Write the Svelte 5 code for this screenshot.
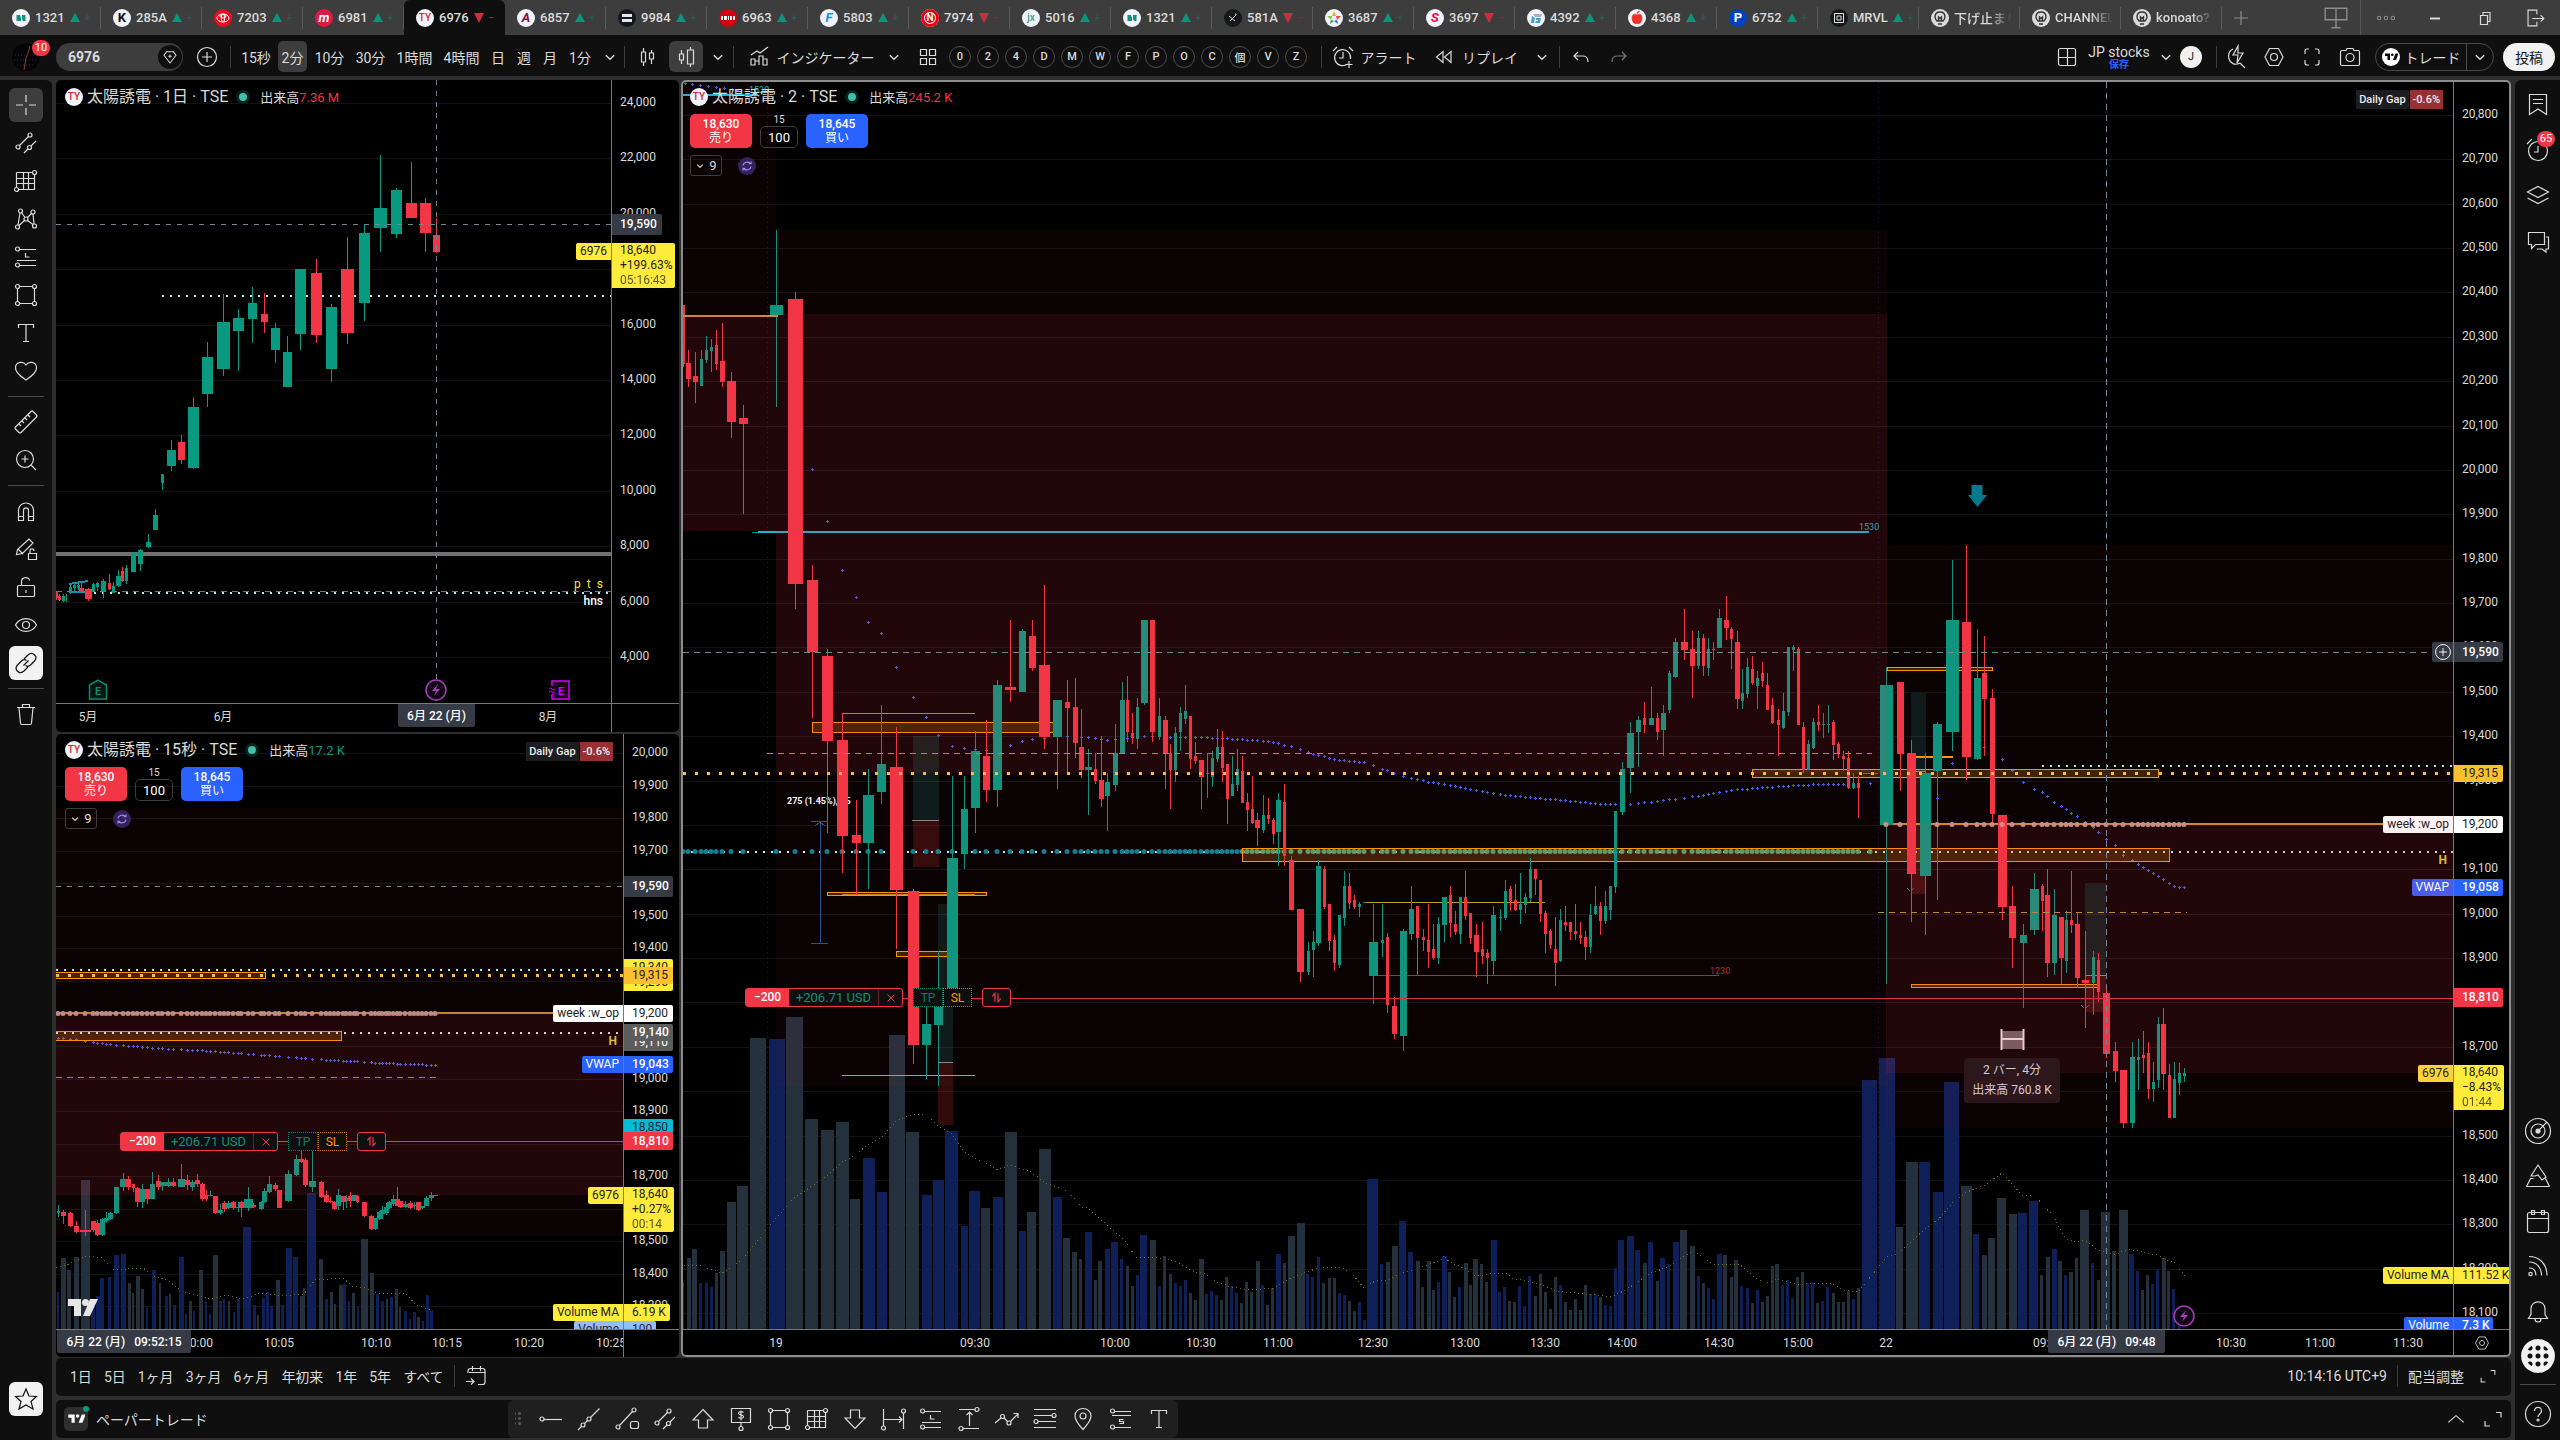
<script>
    const tabs = [
        { name: '1321', logo: 'bars', bg: '#f0f3fa', fg: '#12917c', dir: 'up' },
        { name: '285A', mark: 'K', bg: '#f0f3fa', fg: '#111', dir: 'up' },
        { name: '7203', logo: 'rings', bg: '#eb0a1e', fg: '#fff', dir: 'up' },
        { name: '6981', mark: 'm', slant: true, bg: '#e21a43', fg: '#fff', dir: 'up' },
        { name: '6976', mark: 'TY', bg: '#f0f3fa', fg: '#d8222f', dir: 'down', active: true },
        { name: '6857', mark: 'A', slant: true, bg: '#f0f3fa', fg: '#8a1046', dir: 'up' },
        { name: '9984', logo: 'equal', bg: '#131722', fg: '#e6e6e6', dir: 'up' },
        { name: '6963', logo: 'band', bg: '#d7000f', fg: '#fff', dir: 'up' },
        { name: '5803', mark: 'F', slant: true, bg: '#f0f3fa', fg: '#1492e6', dir: 'up' },
        { name: '7974', mark: 'N', ring: true, bg: '#e60012', fg: '#fff', dir: 'down' },
        { name: '5016', mark: 'jx', bg: '#f0f3fa', fg: '#3a9b86', dir: 'up' },
        { name: '1321', logo: 'bars', bg: '#f0f3fa', fg: '#12917c', dir: 'up' },
        { name: '581A', logo: 'spark', bg: '#16181d', fg: '#ddd', dir: 'down' },
        { name: '3687', logo: 'star', bg: '#f0f3fa', fg: '#2962ff', dir: 'up' },
        { name: '3697', mark: 'S', slant: true, bg: '#f0f3fa', fg: '#e0113c', dir: 'down' },
        { name: '4392', logo: 'fold', bg: '#f0f3fa', fg: '#4b9fd0', dir: 'up' },
        { name: '4368', logo: 'apple', bg: '#f0f3fa', fg: '#ee3124', dir: 'up' },
        { name: '6752', mark: 'P', bg: '#0041c0', fg: '#fff', dir: 'up' },
        { name: 'MRVL', logo: 'chip', bg: '#16181d', fg: '#e6e6e6', dir: 'up' },
        { name: '下げ止まり', logo: 'face', bg: '#dbdbdb', fg: '#333' },
        { name: 'CHANNEL', logo: 'face', bg: '#dbdbdb', fg: '#333' },
        { name: 'konoato?', logo: 'face', bg: '#dbdbdb', fg: '#333' }
    ];

    const logos = {
        bars: '<path d="M4.500 6h3.500l1 3v3H4.500zM10 6h3.500v6H11l-1-2z" fill="currentColor"/>',
        rings: '<g fill="none" stroke="currentColor"><ellipse cx="9" cy="9" rx="6" ry="4"/><ellipse cx="9" cy="7" rx="3" ry="2"/><ellipse cx="9" cy="9" rx="1.6" ry="4"/></g>',
        equal: '<path d="M4 5h10v3H4zM4 10h10v3H4z" fill="currentColor"/>',
        band: '<path d="M2 7h2v4H2zM5 7h3v4H5zM9 7h1v4H9zM11 7h2v4h-2zM14 7h2v4h-2z" fill="currentColor"/>',
        spark: '<path d="M5 7l6 5M6 12l6-6M11 5h1v1" fill="none" stroke="currentColor"/>',
        star: '<path d="M9 2l2 5H7z" fill="#f5a623"/><path d="M16 7l-4 4-1-4z" fill="#e8483f"/><path d="M13 15l-4-3 3-1z" fill="#2962ff"/><path d="M5 15l1-4 3 1z" fill="#1aa260"/><path d="M2 7l5 0-1 4z" fill="#8bc34a"/>',
        fold: '<path d="M6 5h9l-1 3H8z" fill="#a7b4be"/><path d="M5 7l3 2-1 5H4zM9 9h5l-1 5H8l1-2h2v-1H9z" fill="currentColor"/>',
        apple: '<path d="M9 6c3-2 5 0 5 3s-2 6-4 6l-1-1-1 1c-2 0-4-3-4-6s2-5 5-3zM9 5c0-2 1-3 3-3" fill="currentColor" stroke="currentColor" stroke-width=".6"/>',
        chip: '<path d="M4.500 4.500h9v9h-9zM7 7h4v4H7z" fill="none" stroke="currentColor"/>',
        face: '<path d="M9 3c3 0 5 2 5 5 0 2-1 3-2 4H6c-1-1-2-2-2-4 0-3 2-5 5-5zM7.500 12V8L9 9.500 10.500 8v4M7 15h4" fill="none" stroke="currentColor" stroke-width="1.400"/>'
    };

    const icons = {
        plusCircle: '<circle cx="14" cy="14" r="9.500"/><path d="M14 9v10M9 14h10"/>',
        gem: '<path d="M10 8h8l3 4-7 9-7-9zM14 11v4M12 13h4"/>',
        chevron: '<path d="M9.500 12l4.500 4.500 4.500-4.500" stroke-width="1.500"/>',
        chevronBold: '<path d="M6 10l8 8 8-8" stroke-width="3"/>',
        chevronUp: '<path d="M5 18l9-8 9 8"/>',
        candles: '<path d="M10.500 5v4M10.500 19v4M8.500 9h4v10h-4zM18.500 7v3M18.500 16v5M16.500 10h4v6h-4z"/>',
        hollow: '<path d="M9.500 7v4M9.500 17v4M7.500 11h4v6h-4zM18.500 4v3M18.500 21v3M15.500 7h6v14h-6z"/>',
        indicators: '<path d="M6 22v-6h4v6zM10 22v-4h4v4M14 22v-9h4v9M18 22v-6h4v6zM6 12l6-4 3 2 8-6"/>',
        grid4: '<path d="M6.500 6.500h6v6h-6zM15.500 6.500h6v6h-6zM6.500 15.500h6v6h-6zM15.500 15.500h6v6h-6z"/>',
        alarm: '<path d="M18.500 21a8 8 0 1 1 3-5"/><path d="M14 9v6h-4M4 8l4-4M20 4l4 4M20 18v7M16.500 21.500h7"/>',
        replay: '<path d="M13 8.500v11L6.500 14zM21 8.500v11L14.500 14z"/>',
        undo: '<path d="M11 9l-4 4 4 4M7 13h9c3 0 5 2 5 6"/>',
        redo: '<path d="M17 9l4 4-4 4M21 13h-9c-3 0-5 2-5 6"/>',
        layout: '<rect x="5.500" y="5.500" width="17" height="17" rx="2"/><path d="M14.500 5v17M6 14.500h16"/>',
        flash: '<path d="M11 6c-4 2-5 6-4 10s6 7 11 4M18 20l5 5M16 3l-5 9h5l-1 8 6-10h-5z"/>',
        hex: '<path d="M9.500 5.500h9l4.500 8.500-4.500 8.500h-9L5 14z"/><circle cx="14" cy="14" r="3.500"/>',
        full: '<path d="M7 11V8q0-2 2-2h2M17 6h2q2 0 2 2v3M21 17v3q0 2-2 2h-2M11 22H9q-2 0-2-2v-3"/>',
        camera: '<path d="M4.500 9q0-1.500 1.500-1.500h4l1-2h6l1 2h4q1.500 0 1.500 1.500v12q0 1.500-1.500 1.500H6q-1.500 0-1.500-1.500z"/><circle cx="14" cy="14.500" r="4"/>',
        cross: '<path d="M14 4v7M14 17v7M4 14h7M17 14h7"/>',
        trend: '<circle cx="6" cy="18" r="2"/><circle cx="18" cy="6" r="2"/><path d="M7.500 16.500l9-9M12 24l4-4M19 17l5-5"/><circle cx="17.500" cy="18.500" r="2"/>',
        gann: '<path d="M4.500 5.500h16M4.500 5.500v15M6 22.500h16.500V7M5 11.500h18M5 16.500h18M11.500 5v18M16.500 5v18"/><circle cx="22.500" cy="5.500" r="2"/><circle cx="4.500" cy="22.500" r="2"/>',
        pattern: '<path d="M6 20l2-12M9.500 7.500l3.500 5M15.500 12.500l4-4M21 9l1 10M7 20.500l5.500-5M15.500 15.500l5.500 4"/><circle cx="5.500" cy="22" r="2"/><circle cx="8.500" cy="6" r="2"/><circle cx="14" cy="14" r="2"/><circle cx="21" cy="7" r="2"/><circle cx="22.500" cy="21" r="2"/>',
        position: '<circle cx="5.500" cy="6" r="2"/><circle cx="5.500" cy="22" r="2"/><path d="M8 6.500h16M5 17.500h19M8 22.500h16M13.500 10v4h4"/>',
        shortPosition: '<circle cx="5.500" cy="6" r="2"/><circle cx="5.500" cy="22" r="2"/><path d="M8 6.500h16M5 10.500h19M8 22.500h16M16.500 14.500h-4v2h4v2h-4"/>',
        rect: '<path d="M7 5.500h14M7 22.500h14M5.500 7v14M22.500 7v14"/><circle cx="5.500" cy="5.500" r="2"/><circle cx="22.500" cy="5.500" r="2"/><circle cx="5.500" cy="22.500" r="2"/><circle cx="22.500" cy="22.500" r="2"/>',
        text: '<path d="M6.500 9V5.500h15V9M14 5.500v17M11 22.500h6"/>',
        heart: '<path d="M14 23C5 17 3 13 3.500 10c.800-5 7.500-6.500 10.500-2 3-4.500 9.700-3 10.500 2 .500 3-1.500 7-10.500 13z"/>',
        ruler: '<path d="M3.500 19L19 3.500q1-1 2 0L24.500 7q1 1 0 2L9 24.500q-1 1-2 0L3.500 21q-1-1 0-2zM7 16l2 2M10 13l2 2M13 10l2 2M16 7l2 2"/>',
        zoom: '<circle cx="13" cy="13" r="8.500"/><path d="M13 9.500v7M9.500 13h7M19 19l5 5"/>',
        magnet: '<path d="M6.500 23.500v-10c0-10 15-10 15 0v10h-5v-10c0-3.500-5-3.500-5 0v10zM6.500 19.500h5M16.500 19.500h5"/>',
        pencilLock: '<path d="M4.500 19.500l1-5L17 4l4 4-10.500 10.500zM6 14l5 5M16.500 18.500h8v6h-8zM18 18v-2c0-3 4-3 4 0"/>',
        lock: '<rect x="5.500" y="12.500" width="17" height="11" rx="1"/><path d="M9.500 12V8.500c0-5 8-5 8-1M14 17v3"/>',
        eye: '<path d="M3.500 14C8 5.500 20 5.500 24.500 14 20 22.500 8 22.500 3.500 14z"/><circle cx="14" cy="14" r="3.500"/>',
        link: '<path d="M12 10l4-4c4.500-4 10.500 1.500 6.500 6l-4 4c-1.500 1.500-3.500 1.500-5 .500M16 18l-4 4c-4.500 4-10.500-1.500-6.500-6l4-4c1.500-1.500 3.500-1.500 5-.500M11.500 16.500l5-5"/>',
        trash: '<path d="M5 7.500h18M10.500 7V4.500h7V7M7 8l1.500 15q0 1.500 1.500 1.500h8q1.500 0 1.500-1.500L21 8"/>',
        star: '<path d="M14 4l3 7 7.500.500-5.500 5 2 7.500-7-4-7 4 2-7.500-5.500-5L11 11z"/>',
        list: '<path d="M5.500 4.500h17v20L14 19l-8.500 5.500zM9 9.500h10M9 13.500h10"/>',
        clock: '<circle cx="14" cy="15" r="9.500"/><path d="M14 10v6h-4M3 8l5-5M20 3l5 5"/>',
        layers: '<path d="M14 4.500l10.500 5.500L14 15.500 3.500 10zM3.500 16L14 21.500 24.500 16"/>',
        chat: '<path d="M4.500 4.500h16v12h-9l-4 4v-4h-3zM22 9h2.500v12H22v3l-4-3h-5"/>',
        radar: '<circle cx="14" cy="14" r="12.500"/><circle cx="14" cy="14" r="7"/><circle cx="14" cy="14" r="2" fill="currentColor"/><path d="M15 13l8-8"/>',
        pine: '<path d="M2.500 24.500h23M2.500 24.500l4-8h3M25.500 24.500l-4-8M7 14l7-11 8 12-4 3-4-5-3 1z"/>',
        calendar: '<rect x="3.500" y="5.500" width="21" height="20" rx="2"/><path d="M4 11.500h20M7.500 3.500h3v4h-3zM17.500 3.500h3v4h-3z"/>',
        feed: '<circle cx="6.500" cy="22" r="1.700"/><path d="M5 4.500c11 0 18 8 18 19M5 10c8 0 12.500 6 12.500 13.500M5 16c5 0 7 3.500 7 7.500"/>',
        bell: '<path d="M4.500 21.500h19l-2.500-4V12C21 2.500 7 2.500 7 12v5.500zM11 22c0 4 6 4 6 0"/>',
        help: '<circle cx="14" cy="14" r="12.500"/><path d="M10.500 11c0-5 7-4.500 7 0 0 3-3.500 3-3.500 6"/><circle cx="14" cy="20" r="1"/>',
        goto: '<path d="M6 11V9q0-2.500 2.500-2.500h12Q23 6.500 23 9v11q0 2.500-2.500 2.500H16M7 10.500h16M10.500 4v5M18.500 4v5M4 19.500h8M9 16.500l3 3-3 3"/>',
        expand: '<path d="M17 7.500h5v5M6 16v5h5"/>',
        hline: '<circle cx="5" cy="14" r="2"/><path d="M7 14.500h18"/>',
        line: '<circle cx="8" cy="20" r="2"/><circle cx="14" cy="14" r="2"/><path d="M3 25l4-4M9.500 18.500l3-3M15.500 12.500l9-9"/>',
        lineBox: '<circle cx="5" cy="22" r="2"/><circle cx="21" cy="5" r="2"/><path d="M6.500 20.500l13-14"/><rect x="17.500" y="16.500" width="8" height="7" rx="2"/>',
        arrowUp: '<path d="M14 4.500L24 15h-5.500v8h-9v-8H4z"/>',
        arrowDown: '<path d="M14 23.500L24 13h-5.500V5h-9v8H4z"/>',
        note: '<path d="M4.500 3.500h19v14h-19zM14 17.500v4M16.500 7.500c-1-1.500-5-1-5 .700 0 2.300 5 1 5 3.500 0 2-4 2-5 .300M14 5.500v10"/><circle cx="14" cy="23.500" r="2"/>',
        dateRange: '<path d="M4.500 4v17M24.500 8v16M5 14.500h18M20 11.500l3 3-3 3"/><circle cx="4.500" cy="23" r="2"/><circle cx="24.500" cy="6" r="2"/>',
        priceRange: '<path d="M4 4.500h16M8 23.500h16M14.500 7v14M11.500 10l3-3 3 3"/><circle cx="22" cy="4.500" r="2"/><circle cx="6" cy="23.500" r="2"/>',
        zigzag: '<path d="M2 18l6-5M11 13l4 4M17 17l8-8M20.500 8.500H25V13"/><circle cx="9.500" cy="11.500" r="2"/><circle cx="16" cy="18" r="2"/>',
        fib: '<path d="M3 4.500h22M3 10.500h18M7 16.500h18M3 22.500h22"/><circle cx="23" cy="10.500" r="2"/><circle cx="5" cy="16.500" r="2"/>',
        pin: '<path d="M14 24.500C9 19 6 15 6 11c0-10 16-10 16 0 0 4-3 8-8 13.500z"/><circle cx="14" cy="11" r="3"/>',
        monitor: '<path d="M4.500 5.500h19v10h-19zM14 5v17M10 22.500h8"/>',
        dots3: '<circle cx="6" cy="14" r="2"/><circle cx="14" cy="14" r="2"/><circle cx="22" cy="14" r="2"/>',
        minimize: '<path d="M9 14.500h10" stroke-width="2"/>',
        restore: '<path d="M9.500 11.500h7v9h-7zM12 11V8.500h7v9h-2.500"/>',
        exit: '<path d="M16 10V5.500H6.500v17H16V18M11 14.500h12M20 11l3.500 3.500L20 18"/>',
        add: '<path d="M14 7v14M7 14h14"/>',
        cycle: '<path d="M7 13c1-6 9-8 13-3M21 15c-1 6-9 8-13 3M17 10h4V6M11 18H7v4" stroke-width="2"/>',
        swap: '<path d="M11.500 21V7L7 12M16.500 7v14L21 16" stroke-width="2"/>',
        close: '<path d="M7 7l14 14M21 7L7 21" stroke-width="2"/>',
        tv: '<path d="M12 20H7v-8H2V7h10zM24 20h-6l5-13h6z" fill="currentColor" stroke="none"/><circle cx="16.500" cy="9.500" r="2.700" fill="currentColor" stroke="none"/>'
    };

    const intervals = [
        ['15秒', 36], ['2分', 29], ['10分', 37], ['30分', 37], ['1時間', 43], ['4時間', 43],
        ['日', 22], ['週', 22], ['月', 22], ['1分', 30]
    ];
    const layoutKeys = ['0', '2', '4', 'D', 'M', 'W', 'F', 'P', 'O', 'C', '個', 'V', 'Z'];
    const drawTools = ['cross', 'trend', 'gann', 'pattern', 'position', 'rect', 'text', 'heart', '-', 'ruler', 'zoom', '-', 'magnet', 'pencilLock', 'lock', 'eye', 'link', '-', 'trash'];
    const sideTop = ['list', 'clock', 'layers', 'chat'];
    const sideBottom = ['radar', 'pine', 'calendar', 'feed', 'bell'];
    const favorites = ['hline', 'line', 'lineBox', 'trend', 'arrowUp', 'note', 'rect', 'gann', 'arrowDown', 'dateRange', 'position', 'priceRange', 'zigzag', 'fib', 'pin', 'shortPosition', 'text'];
    const ranges = ['1日', '5日', '1ヶ月', '3ヶ月', '6ヶ月', '年初来', '1年', '5年', 'すべて'];

    // every series is stored on its own finer grid: origin plus units per pixel
    const grid = (x, y, kx, ky) => (px, py) => [x + px / kx, y + py / ky];
    const mainA = grid(680, 180, 2.45, 2.45);
    const mainB = grid(1280, 400, 2.45, 2.45);
    const mainC = grid(1860, 400, 2.24, 2.45);
    const mainD = grid(1860, 1000, 2.24, 3);
    const volA = grid(680, 800, 2.45, 2.45);
    const volB = grid(1300, 1000, 2.45, 3);
    const day = grid(0, 80, 2.272, 2.376);
    const sec = grid(0, 730, 2.272, 2.208);

    const rows = (text) => text.split(/[;\n]/).map((r) => r.trim()).filter(Boolean).map((r) => {
        const [c, ...n] = r.split(' ');
        return [c, ...n.map(Number)];
    });

    // colour, centre, width, high, body top, body bottom, low
    function candles(at, text) {
        const unit = at(1, 0)[0] - at(0, 0)[0];
        return rows(text).map(([c, cx, w, hi, top, bottom, lo]) => {
            const x = Math.floor(at(cx, 0)[0]);
            const y = (v) => Math.round(at(0, v)[1]);
            const width = Math.round(w * unit) | 1;
            return { x, w: width, hi: y(hi), top: y(top), h: Math.max(1, y(bottom) - y(top)), lo: y(lo), fill: c === 'g' ? '#089981' : '#f23645' };
        });
    }

    // colour, centre, width, top
    function volumes(at, text) {
        const unit = at(1, 0)[0] - at(0, 0)[0];
        return rows(text).map(([c, cx, w, top]) => {
            const y = Math.round(at(0, top)[1]);
            return { x: Math.round(at(cx - w / 2, 0)[0]), y, w: Math.max(2, Math.round(w * unit)), h: 1329 - y, fill: c === 'b' ? '#0e2057' : '#25303d' };
        });
    }

    const points = (at, text) => text.split(' ').map((p) => at(...p.split(',').map(Number)));
    const poly = (pts) => pts.map((p) => p.map(Math.round).join(',')).join(' ');

    // samples a polyline at the bar centres
    function sample(pts, xs) {
        const out = [];
        for (const x of xs) {
            for (let i = 1; i < pts.length; i++) {
                const [x0, y0] = pts[i - 1];
                const [x1, y1] = pts[i];
                if (x >= x0 - 1 && x <= x1) {
                    out.push([x, Math.round(y0 + ((y1 - y0) * (x - x0)) / (x1 - x0))]);
                    break;
                }
            }
        }
        return out;
    }

    const mainCandles = [
        ...candles(mainA, `r 9 6 306 306 451 458;r 21 12 416 448 488 507;r 38 12 421 480 495 546;g 53 7 416 439 505 505;g 65 8 382 416 441 448
            g 77 8 390 409 419 470;r 90 7 367 404 451 465;r 104 12 350 443 495 507;r 126 22 470 492 593 632;r 156 22 551 583 598 818
            g 236 32 122 306 331 556;r 283 36 274 292 990 1051;r 324 27 943 980 1156 1318;r 361 27 1149 1166 1374 1600;r 398 27 1306 1372 1607 1698
            r 432 22 1519 1605 1624 1752;g 461 27 1443 1507 1624 1737;g 494 22 1286 1431 1499 1529;r 530 32 1340 1438 1739 1884;r 572 27 1737 1742 2119 2166
            g 604 22 2020 2068 2119 2203;g 633 22 1890 1990 2070 2220;g 667 27 1460 1661 2000 2000;g 697 18 1460 1541 1651 1687;g 724 22 1350 1399 1539 1600
            r 750 18 1323 1411 1494 1524;g 778 22 1225 1237 1494 1536;r 810 27 1078 1242 1249 1279;g 839 17 1100 1105 1254 1254;r 863 17 1078 1117 1196 1203
            r 893 27 992 1188 1365 1394;g 925 22 1274 1274 1365 1492;r 949 12 1225 1279 1294 1453;r 969 12 1220 1291 1379 1416;r 984 12 1296 1389 1445 1465
            g 1001 17 1394 1438 1445 1556;r 1018 8 1404 1443 1472 1480;r 1033 12 1362 1470 1517 1536;g 1047 12 1453 1475 1509 1595;g 1067 12 1333 1404 1482 1497
            g 1084 12 1230 1274 1406 1406;r 1097 7 1215 1274 1352 1377;r 1109 8 1306 1355 1367 1382;g 1121 8 1269 1291 1370 1394;g 1138 18 1078 1078 1281 1286
            r 1157 13 1078 1078 1352 1377;g 1175 7 1269 1313 1365 1372;r 1190 13 1313 1323 1406 1492;r 1202 7 1382 1404 1445 1541;g 1214 8 1340 1355 1445 1475
            g 1226 8 1291 1306 1352 1399;g 1238 7 1237 1301 1321 1333;r 1250 7 1313 1313 1419 1443;r 1263 8 1377 1411 1423 1431;r 1278 13 1421 1421 1463 1541
            g 1292 7 1404 1453 1455 1514;g 1304 7 1399 1416 1463 1487;g 1317 8 1345 1389 1419 1426;r 1329 8 1350 1389 1441 1475;r 1341 8 1431 1431 1517 1578
            g 1354 8 1411 1480 1509 1509;g 1366 8 1394 1443 1482 1497;r 1378 8 1411 1448 1526 1526;r 1390 7 1502 1524 1543 1595;r 1402 7 1460 1541 1575 1578
            r 1415 12 1551 1568 1588 1632;g 1429 8 1507 1556 1592 1600;r 1441 8 1514 1556 1566 1578;r 1454 8 1563 1568 1602 1627;g 1466 12 1502 1519 1597 1681
            r 1481 8 1480 1524 1656 1680;r 1498 12 1655 1666 1788 1788;r 1520 17 1786 1786 1940 1965;g 1540 8 1867 1889 1940 1948;g 1552 8 1840 1867 1886 1953`),
        ...candles(mainB, `g 94 12 1127 1142 1330 1338;r 109 8 1142 1149 1242 1247;r 121 8 1235 1235 1325 1350;r 133 8 1311 1323 1379 1399;g 145 8 1262 1262 1384 1391
            g 158 8 1154 1191 1269 1289;r 170 8 1159 1191 1232 1247;r 182 8 1213 1225 1242 1247;g 195 8 1230 1235 1242 1267;g 207 8 1230 1230 1232 1232
            g 229 22 1235 1328 1411 1480;g 251 8 1235 1323 1330 1365;r 263 7 1306 1316 1482 1502;r 280 13 1463 1485 1553 1566;g 302 17 1296 1301 1558 1595
            g 322 12 1191 1247 1308 1323;r 337 8 1240 1240 1318 1409;r 351 7 1296 1316 1323 1350;r 364 8 1235 1323 1352 1391;r 376 8 1284 1345 1367 1372
            g 388 7 1267 1284 1367 1382;g 403 13 1218 1218 1286 1328;r 417 8 1191 1213 1281 1316;r 430 8 1252 1284 1303 1311;g 442 7 1218 1218 1308 1333
            r 454 8 1154 1218 1264 1274;r 466 7 1257 1257 1318 1333;r 481 13 1284 1311 1352 1414;r 496 8 1279 1345 1362 1382;r 508 8 1345 1355 1367 1431
            g 523 12 1240 1262 1374 1409;g 540 8 1247 1267 1269 1301;g 552 8 1176 1203 1269 1274;r 564 8 1191 1198 1227 1252;r 577 8 1186 1225 1249 1252
            g 589 8 1159 1235 1249 1284;g 601 7 1208 1218 1237 1257;g 613 7 1122 1149 1220 1230;r 626 8 1149 1149 1174 1213;r 638 8 1176 1176 1259 1279
            r 650 7 1252 1257 1308 1355;r 662 7 1296 1301 1335 1345;r 675 8 1267 1345 1379 1436;g 687 8 1247 1274 1374 1377;r 699 8 1240 1279 1286 1301
            r 711 8 1279 1279 1303 1323;r 724 8 1235 1301 1308 1323;r 736 7 1279 1311 1318 1333;r 748 8 1301 1316 1340 1372;g 760 7 1235 1262 1340 1355
            g 773 8 1191 1240 1259 1262;r 785 8 1230 1240 1276 1311;g 797 7 1203 1240 1276 1284;g 809 7 1191 1191 1249 1274;g 822 8 1007 1007 1193 1208
            g 839 12 887 904 1009 1017;g 858 17 789 816 902 963;g 878 12 774 784 813 899;r 893 8 740 779 796 816;g 910 12 703 779 796 796
            r 925 8 767 779 813 833;g 939 13 747 767 808 872;g 954 7 664 669 759 767;g 969 12 583 593 679 681;r 991 18 512 593 612 637
            r 1010 13 566 610 652 730;g 1026 8 566 583 652 659;r 1037 7 573 583 652 676;g 1050 8 583 610 657 676;g 1062 8 593 610 612 637
            g 1077 13 512 534 608 608;r 1094 12 480 539 559 588;r 1106 8 556 561 586 659;r 1121 12 566 593 733 757;g 1133 8 659 718 737 757
            g 1146 7 632 654 720 730;r 1157 7 627 659 693 698;g 1170 8 664 681 701 757;r 1182 8 642 669 688 703;r 1194 7 669 698 759 759
            r 1206 7 730 747 791 794;r 1221 8 757 784 796 872;g 1233 7 718 762 804 806;g 1246 7 605 605 764 774;g 1258 8 600 605 612 664
            r 1270 7 605 610 796 796;r 1282 7 789 801 906 914;g 1295 7 833 843 906 906;g 1307 8 779 789 853 855;r 1320 8 747 789 796 811
            g 1331 7 767 794 796 828;g 1344 7 747 794 796 816;r 1356 8 784 789 845 882;r 1368 8 838 843 867 877;r 1380 7 860 872 880 909
            r 1392 7 860 877 951 953;g 1405 8 914 938 951 953;r 1417 8 921 938 951 1024;g 1446 36 913 913 915 915;g 1486 32 654 698 1041 1431
            r 1520 17 691 691 867 958;r 1547 22 833 865 1161 1279`),
        ...candles(mainC, `g 147 25 865 914 1166 1311;g 174 20 789 794 910 1225;g 207 29 392 539 813 860;r 238 21 355 544 875 931;g 263 16 561 681 880 882
            r 279 11 578 669 733 872;r 296 11 708 730 1014 1040;r 319 20 1017 1017 1242 1274;r 341 15 1191 1240 1318 1392;g 366 16 1284 1311 1330 1490
            g 391 20 1159 1198 1298 1311;r 408 7 1186 1191 1227 1301;r 420 12 1149 1213 1379 1414;g 435 11 1198 1262 1379 1409;r 451 11 1267 1267 1367 1431
            g 462 7 1252 1274 1374 1404;r 473 7 1154 1274 1286 1306;r 487 11 1257 1284 1416 1441;r 505 16 1301 1421 1428 1539;g 523 6 1350 1365 1428 1507
            r 534 7 1355 1372 1450 1475;r 552 16 1441 1453 1602 1612`),
        ...candles(mainD, `r 572 11 126 153 213 246;r 590 16 210 210 369 384;g 610 11 126 171 369 384;g 624 7 117 171 180 270;r 635 6 93 165 174 219
            r 646 7 126 159 267 297;g 657 7 186 246 267 306;g 669 7 51 72 240 264;r 680 11 24 72 222 270;r 693 7 192 225 354 354
            g 704 7 186 237 354 354;g 715 7 189 219 249 285;g 727 7 204 219 228 246`)
    ];

    const mainVolumes = [
        ...volumes(volA, `n 7 6 1181;n 22 10 1122;n 36 13 1100;b 51 8 1183;b 65 8 1183;b 77 8 1193;n 90 8 1159;n 104 12 1105;n 126 22 985;n 153 27 946
            n 191 40 583;b 237 39 586;n 280 41 532;n 322 32 782;n 361 32 808;n 398 32 789;n 428 25 978;b 463 30 877;b 495 24 960;n 531 39 576
            n 570 32 813;b 605 24 968;b 634 26 931;b 665 32 811;b 697 18 1044;b 721 26 958;n 748 22 1000;b 779 24 973;n 811 30 813;b 839 17 1056
            n 861 22 1009;n 895 29 855;b 925 22 973;n 946 17 1073;n 966 13 1107;n 981 7 1125;b 1000 17 1058;n 1018 8 1176;n 1029 10 1129;b 1047 12 1100
            b 1065 17 1083;b 1082 7 1125;n 1096 8 1142;n 1109 7 1191;b 1121 8 1164;b 1136 17 1066;n 1158 15 1078;b 1174 8 1191;n 1187 8 1117;n 1201 7 1161
            b 1214 8 1183;b 1226 7 1191;b 1238 8 1176;n 1250 7 1208;n 1263 8 1225;n 1278 12 1125;b 1290 8 1210;b 1302 7 1203;b 1314 7 1213;n 1326 7 1225
            n 1339 8 1169;b 1351 8 1191;b 1363 7 1208;n 1375 7 1232;n 1388 8 1181;n 1400 8 1205;n 1416 10 1129;b 1427 8 1188;n 1440 7 1237;n 1451 8 1196
            b 1466 12 1112;n 1481 8 1134;n 1498 17 1068;n 1521 19 1036`),
        ...volumes(volB, `b 18 7 822;b 30 7 831;b 46 8 771;n 57 7 849;n 72 8 834;n 84 7 834;b 96 7 879;b 109 8 885;n 121 7 903;n 133 7 933;b 145 7 906;b 158 8 960
            b 177 27 537;b 199 7 792;n 215 9 786;n 232 15 738;b 251 17 663;b 271 12 756;n 289 10 783;n 300 8 861;n 316 10 783;n 326 7 870;b 339 7 846
            b 354 12 768;n 366 7 816;n 378 7 891;b 390 7 861;n 407 10 789;n 417 7 855;n 430 12 777;n 444 7 792;n 457 8 846;b 475 15 720;b 488 7 876
            b 501 8 861;n 513 7 903;n 525 7 906;b 537 7 858;b 550 8 918;b 562 7 828;n 577 8 888;n 589 7 822;n 601 7 876;n 613 7 927;n 626 8 831
            b 638 7 855;n 650 7 906;n 662 7 930;n 675 8 897;n 687 7 930;n 699 7 855;b 711 7 882;b 724 8 882;n 736 7 891;b 748 7 915;b 760 7 918
            b 773 8 804;b 786 15 720;b 809 17 708;b 827 12 750;n 845 10 789;b 859 12 726;n 876 8 843;b 888 12 774;b 902 8 792;b 921 15 726;n 939 17 690
            n 961 13 738;b 976 7 828;n 988 8 849;b 1000 7 864;b 1013 8 897;b 1028 12 762;n 1041 10 765;n 1057 8 831;n 1068 10 780;b 1083 8 858
            b 1096 8 864;n 1108 8 909;b 1121 8 870;n 1133 8 906;n 1145 7 888;n 1157 7 798;n 1168 10 792;b 1182 8 855;b 1194 7 840;b 1206 7 894
            n 1219 8 831;n 1231 8 816;b 1243 7 849;b 1256 7 846;n 1268 8 909;b 1280 8 903;b 1292 7 861;n 1307 8 879;n 1319 7 906;n 1331 7 906
            n 1343 7 873;b 1356 8 897;n 1368 7 864;b 1395 37 240;b 1438 39 174`),
        ...volumes(mainD, `n 88 15 681;n 116 27 486;b 144 25 486;b 175 22 576;b 205 34 246;n 239 24 558;b 260 14 702;n 278 11 765;n 294 15 714;n 317 20 594
            n 342 18 642;b 364 20 639;b 389 20 603;n 406 7 825;n 421 9 771;b 435 11 747;n 448 8 783;b 460 7 825;n 472 9 816;n 485 6 774;n 503 20 630
            b 520 7 789;n 534 7 840;n 550 20 636;n 568 9 753;n 590 20 630;b 608 11 762;b 621 7 813;n 632 7 870;n 644 7 825;b 655 7 852;b 666 7 810
            n 680 9 774;n 691 7 813;b 702 7 867;b 715 6 960`)
    ];

    const dayCandles = candles(day, `r 129 4 1214 1215 1230 1236;r 135 7 1222 1225 1235 1238;g 144 6 1222 1226 1238 1240;g 151 3 1222 1224 1236 1240
        g 161 5 1197 1205 1215 1222;g 170 7 1198 1200 1208 1215;g 178 4 1198 1200 1208 1212;r 185 10 1196 1208 1215 1218;r 201 13 1208 1210 1233 1239
        g 212 6 1196 1198 1214 1217;g 222 7 1192 1194 1204 1214;g 235 11 1186 1190 1215 1230;r 249 7 1174 1195 1210 1212;g 258 6 1192 1202 1218 1220
        g 269 8 1164 1178 1203 1204;r 279 7 1158 1166 1190 1193;g 288 7 1152 1159 1190 1198;g 303 11 1121 1122 1168 1168;g 320 11 1114 1117 1150 1166
        g 337 11 1079 1098 1109 1112;g 353 10 1019 1033 1069 1069;g 369 6 936 936 957 974;g 390 20 855 879 917 929;r 412 16 843 860 903 912
        g 439 25 753 777 922 924;g 471 25 622 658 746 777;g 508 30 508 575 687 703;g 541 25 544 565 596 691;g 574 20 492 530 568 625
        r 601 16 506 556 575 601;g 626 20 577 589 641 672;g 653 20 608 646 729 729;g 682 25 449 449 603 641;r 719 25 425 459 606 625
        g 753 25 532 539 687 717;r 789 29 373 449 601 627;g 828 25 344 363 530 573;g 864 29 178 304 352 409;g 901 25 257 261 366 375
        r 935 25 195 292 328 328;r 966 25 280 292 363 409;r 992 13 328 368 409 411`);

    const secCandles = candles(sec, `g 132 7 1048 1062 1067 1076;r 145 11 1059 1064 1072 1090;r 160 11 1064 1066 1096 1098;r 174 11 1085 1095 1109 1111
        r 195 22 1059 1104 1109 1117;r 212 11 1085 1085 1104 1109;r 221 8 1081 1089 1115 1117;g 232 10 1078 1080 1115 1117;g 241 9 1064 1078 1085 1088
        g 251 11 1065 1067 1080 1083;g 264 11 1008 1010 1067 1068;g 281 14 978 992 1010 1018;r 292 12 984 992 1010 1016;r 303 7 1002 1003 1011 1020
        r 312 8 1010 1012 1042 1054;g 324 9 1002 1013 1042 1056;r 335 10 1013 1014 1036 1046;g 347 10 975 1003 1036 1036;r 360 8 982 996 1009 1016
        g 370 8 998 999 1007 1018;g 382 15 990 997 1007 1009;r 395 9 990 997 1006 1008;g 412 14 958 992 1010 1010;r 425 12 982 993 1005 1015
        g 437 10 993 997 1008 1018;r 449 9 980 993 1003 1008;r 460 11 1001 1003 1036 1040;r 469 7 1015 1026 1036 1040;g 478 8 1018 1026 1028 1030
        r 490 11 1030 1030 1066 1068;g 501 8 1047 1060 1066 1070;r 511 8 1041 1045 1058 1064;g 520 9 1041 1044 1055 1057;r 531 8 1041 1043 1055 1060
        g 541 8 1042 1054 1055 1064;r 549 8 1040 1042 1056 1075;g 564 18 1010 1036 1056 1063;r 577 8 1044 1048 1054 1056;g 594 9 1040 1042 1057 1060
        g 601 8 1012 1018 1043 1045;g 613 10 985 1002 1020 1022;r 626 9 1000 1004 1014 1017;r 636 9 1015 1016 1055 1056;g 656 13 972 981 1040 1042
        g 673 12 938 947 982 984;r 685 10 930 947 953 955;r 695 10 945 950 1005 1008;g 709 16 928 996 1008 1020;r 730 11 996 998 1031 1034
        r 741 10 1018 1026 1043 1045;r 750 8 1032 1040 1043 1045;r 759 9 1040 1043 1057 1060;g 769 12 1014 1027 1050 1060;r 781 8 1030 1030 1043 1060
        g 788 7 1027 1034 1040 1056;r 797 8 1021 1030 1040 1053;g 806 8 1026 1026 1040 1040;r 812 7 1026 1029 1043 1045;r 828 10 1042 1042 1074 1076
        r 844 12 1070 1073 1101 1103;g 854 10 1078 1078 1101 1103;g 862 8 1062 1065 1080 1082;g 870 8 1050 1060 1068 1080;g 878 8 1045 1053 1067 1070
        g 886 8 1040 1042 1055 1057;g 894 8 1026 1036 1046 1050;r 903 10 1008 1036 1050 1052;r 911 8 1041 1041 1053 1055;g 921 10 1040 1047 1054 1056
        r 932 8 1040 1045 1056 1058;g 941 8 1042 1048 1050 1058;r 950 8 1042 1042 1060 1063;g 959 8 1050 1050 1056 1058;g 970 8 1030 1034 1050 1052
        g 980 9 1020 1026 1034 1040;g 990 8 1027 1027 1029 1029`);

    const secVolumes = volumes(sec, `b 132 4 1241;n 144 11 1166;n 156 9 1193;n 174 11 1164;n 194 20 994;b 212 9 1270;b 221 8 1250;b 232 9 1210;b 248 7 1208
        b 264 11 1159;b 281 11 1157;n 295 7 1220;n 303 5 1243;n 312 8 1206;n 324 6 1235;b 335 5 1275;b 350 10 1193;n 364 5 1220;b 377 6 1250
        n 387 5 1245;b 397 6 1270;b 412 11 1164;b 423 5 1290;n 433 7 1260;b 442 5 1283;n 457 9 1193;b 468 5 1262;b 478 5 1290;n 489 11 1159
        b 500 6 1260;b 509 5 1257;n 521 5 1260;b 532 5 1285;b 542 6 1257;b 561 18 1098;b 577 6 1270;n 587 5 1292;b 598 6 1255;b 607 6 1240
        b 617 6 1272;n 632 8 1215;b 642 6 1270;b 656 13 1144;b 671 11 1164;n 684 6 1250;n 692 5 1232;b 708 20 1023;n 729 10 1168;b 741 6 1257
        n 752 6 1240;n 762 5 1267;n 774 8 1226;b 783 6 1223;b 793 5 1260;n 803 7 1243;b 813 5 1275;n 828 15 1124;n 846 9 1199;b 858 7 1245
        b 869 6 1260;n 879 5 1257;b 888 6 1252;n 900 7 1235;n 910 5 1275;b 921 6 1282;b 931 5 1300;b 941 6 1285;n 951 6 1297;b 961 5 1305
        b 970 6 1248;b 980 6 1280`);

    const mainXs = mainCandles.map((c) => c.x);
    const secXs = secCandles.map((c) => c.x);

    const vwapMain = [
        ...sample([
            ...points(mainA, '324,709 361,839 398,959 432,1023 461,1084 494,1111 530,1194 572,1268 604,1317 633,1361 667,1386 697,1393 750,1397 810,1383 839,1375 863,1370 925,1362 984,1364 1047,1371 1138,1363 1263,1364 1341,1368 1441,1375 1498,1388 1540,1402'),
            ...points(mainB, '94,870 145,882 207,888 263,908 302,922 364,935 430,946 523,964 589,971 699,981 809,991 858,989 910,984 991,974 1077,961 1121,954 1206,947 1320,941 1417,939 1447,939')
        ], mainXs),
        ...sample(points(mainC, '174,971 207,888 279,849 319,880 341,908 366,937 391,954 408,961 435,986 462,1003 487,1021 523,1047 552,1077 572,1091 590,1116 624,1137 669,1167 693,1184 704,1192 729,1194'), mainXs)
    ];
    const vwapSec = sample(points(sec, '127,679 180,684 212,690 290,697 370,703 450,707 550,714 640,720 710,726 800,731 880,736 930,737 995,740'), secXs);

    const maMain = [
        ...points(volA, '10,1142 45,1140 104,1160 153,1128 211,1054 280,974 361,920 398,887 428,870 463,842 494,826 531,784 575,769 603,770 634,800 665,815 697,862 778,906 808,894 861,912 895,938 950,957 985,997 1000,1000 1065,1058 1090,1078 1117,1122 1158,1120 1210,1130 1263,1160 1280,1156 1315,1182 1351,1193 1400,1200 1454,1196 1498,1170 1563,1147'),
        ...points(volB, '50,802 100,800 130,825 158,864 183,843 215,840 251,818 300,800 345,779 353,765 366,786 407,808 420,824 450,826 475,818 505,820 525,837 550,840 589,852 626,873 675,880 724,884 760,892 785,880 827,846 859,820 902,800 939,772 965,753 1013,792 1075,793 1121,840 1145,850 1170,836 1219,856 1250,850 1300,850 1330,870 1368,875 1438,772 1468,760 1530,690 1568,655'),
        ...points(mainD, '175,660 205,610 239,575 280,556 318,520 365,589 389,585 435,650 460,715 480,727 503,721 534,751 572,765 600,747 666,766 680,778 703,785 727,828')
    ];
    const maSec = points(sec, '127,1189 146,1183 165,1174 194,1162 232,1165 255,1190 290,1190 325,1187 350,1206 380,1215 415,1241 440,1248 480,1256 510,1248 555,1256 590,1243 640,1250 690,1246 715,1215 780,1210 800,1228 830,1232 860,1246 920,1243 945,1270 990,1285');

    const scale = (from, step, count, y, pitch) =>
        Array.from({ length: count }, (_, i) => ({ text: (from - step * i).toLocaleString('en-US'), y: Math.round(y + pitch * i) }));

    const yellow = '#ffeb3b';
    const panes = {
        day: {
            x: 56, y: 80, title: '太陽誘電 · 1日 · TSE', volume: '7.36', unit: 'M', tone: 'down',
            prices: scale(24000, 2000, 11, 102, 55.4),
            covered: ['18,000'],
            times: [['5月', 88], ['6月', 223], ['8月', 548]],
            cursor: { x: 398, w: 77, text: '6月 22 (月)' },
            tags: [
                { y: 214, h: 21, text: ['19,590'], bg: '#363a45', fg: '#fff', w: 50, bold: true },
                { y: 243, h: 45, text: ['18,640', '+199.63%', '05:16:43'], bg: yellow, fg: '#222', w: 63 }
            ],
            names: [{ y: 243, text: '6976', bg: yellow, fg: '#222' }]
        },
        sec: {
            x: 56, y: 734, title: '太陽誘電 · 15秒 · TSE', volume: '17.2', unit: 'K', tone: 'up', trade: true,
            prices: scale(20000, 100, 18, 752, 32.55),
            covered: ['19,600', '19,300', '19,200', '19,100', '18,800', '18,600'],
            times: [['10:00', 198], ['10:05', 279], ['10:10', 376], ['10:15', 447], ['10:20', 529], ['10:25', 611]],
            cursor: { x: 57, w: 134, text: '6月 22 (月)   09:52:15' },
            tags: [
                { y: 876, h: 21, text: ['19,590'], bg: '#363a45', fg: '#fff', w: 49, bold: true },
                { y: 959, h: 17, text: ['19,340'], bg: yellow, fg: '#222', w: 49 },
                { y: 974, h: 17, text: ['19,295'], bg: yellow, fg: '#222', w: 49 },
                { y: 967, h: 17, text: ['19,315'], bg: '#fbc02d', fg: '#222', w: 49 },
                { y: 1005, h: 17, text: ['19,200'], bg: '#fff', fg: '#222', w: 49 },
                { y: 1034, h: 17, text: ['19,110'], bg: '#5d5d5d', fg: '#fff', w: 49 },
                { y: 1024, h: 17, text: ['19,140'], bg: '#5d5d5d', fg: '#fff', w: 49, bold: true },
                { y: 1056, h: 17, text: ['19,043'], bg: '#2962ff', fg: '#fff', w: 49, bold: true },
                { y: 1119, h: 17, text: ['18,850'], bg: '#00bcd4', fg: '#222', w: 49 },
                { y: 1132, h: 18, text: ['18,810'], bg: '#f23645', fg: '#fff', w: 49, bold: true },
                { y: 1187, h: 45, text: ['18,640', '+0.27%', '00:14'], bg: yellow, fg: '#222', w: 50 },
                { y: 1304, h: 17, text: ['6.19 K'], bg: yellow, fg: '#222', w: 46 },
                { y: 1321, h: 17, text: ['100'], bg: '#90bff9', fg: '#222', w: 32 }
            ],
            names: [
                { y: 1005, text: 'week :w_op', bg: '#fff', fg: '#222' },
                { y: 1056, text: 'VWAP', bg: '#2962ff', fg: '#fff' },
                { y: 1187, text: '6976', bg: yellow, fg: '#222' },
                { y: 1304, text: 'Volume MA', bg: yellow, fg: '#222' },
                { y: 1321, text: 'Volume', bg: '#90bff9', fg: '#222' }
            ],
            order: { x: 120, y: 1132 }
        },
        main: {
            x: 683, y: 82, title: '太陽誘電 · 2 · TSE', volume: '245.2', unit: 'K', tone: 'down', trade: true,
            prices: scale(20800, 100, 28, 114, 44.37),
            covered: ['19,200', '18,800', '18,600'],
            times: [['19', 776], ['09:30', 975], ['10:00', 1115], ['10:30', 1201], ['11:00', 1278], ['12:30', 1373], ['13:00', 1465], ['13:30', 1545], ['14:00', 1622], ['14:30', 1719], ['15:00', 1798], ['22', 1886], ['09:30', 2048], ['10:30', 2231], ['11:00', 2320], ['11:30', 2408]],
            cursor: { x: 2048, w: 117, text: '6月 22 (月)   09:48' },
            tags: [
                { y: 642, h: 20, text: ['19,590'], bg: '#363a45', fg: '#fff', w: 49, bold: true },
                { y: 765, h: 17, text: ['19,315'], bg: '#fbc02d', fg: '#222', w: 49 },
                { y: 816, h: 17, text: ['19,200'], bg: '#fff', fg: '#222', w: 49 },
                { y: 879, h: 17, text: ['19,058'], bg: '#2962ff', fg: '#fff', w: 49, bold: true },
                { y: 988, h: 19, text: ['18,810'], bg: '#f23645', fg: '#fff', w: 49, bold: true },
                { y: 1065, h: 45, text: ['18,640', '−8.43%', '01:44'], bg: yellow, fg: '#222', w: 50 },
                { y: 1267, h: 17, text: ['111.52 K'], bg: yellow, fg: '#222', w: 56 },
                { y: 1317, h: 17, text: ['7.3 K'], bg: '#2962ff', fg: '#fff', w: 39, bold: true }
            ],
            names: [
                { y: 816, text: 'week :w_op', bg: '#fff0f2', fg: '#222' },
                { y: 879, text: 'VWAP', bg: '#4a5ce8', fg: '#fff' },
                { y: 1065, text: '6976', bg: '#ffd23b', fg: '#222' },
                { y: 1267, text: 'Volume MA', bg: yellow, fg: '#222' },
                { y: 1317, text: 'Volume', bg: '#2962ff', fg: '#fff' }
            ],
            order: { x: 745, y: 988 }
        }
    };

    let quantity = $state('100');
    let symbol = $state('6976');
</script>

{#snippet icon(name, size = 28)}
    <svg class="icon" viewBox="0 0 28 28" width={size} height={size} aria-hidden="true">{@html icons[name]}</svg>
{/snippet}

{#snippet bolt(x, y)}
    <g class="smooth">
        <circle cx={x} cy={y} r="10" fill="#120616" stroke="#a73cb8" stroke-width="1.500" />
        <path d="M{x + 2} {y - 6}l-6 7h4l-2 5 6-7h-4z" fill="#a73cb8" />
    </g>
{/snippet}

{#snippet bars(list)}
    {#each list as v}
        <rect x={v.x} y={v.y} width={v.w} height={v.h} fill={v.fill} />
    {/each}
{/snippet}

{#snippet sticks(list)}
    {#each list as c}
        <rect x={c.x} y={c.hi} width="1" height={Math.max(1, c.lo - c.hi)} fill={c.fill} />
        <rect x={c.x - (c.w - 1) / 2} y={c.top} width={c.w} height={c.h} fill={c.fill} />
    {/each}
{/snippet}

{#snippet box(x, y, w, h)}
    <rect x={x + 0.5} y={y + 0.5} width={w} height={h} fill="rgba(255,152,0,.22)" stroke="#ff9800" />
{/snippet}

{#snippet ticks(list)}
    {#each list as [x, y]}
        <path d="M{x - 1} {y + 0.5}h3M{x + 0.5} {y - 1}v3" stroke="#3d5af1" />
    {/each}
{/snippet}

{#snippet zone(x, y, w, h, strength)}
    <rect {x} {y} width={w} height={h} fill="#f23645" opacity={strength} />
{/snippet}

{#snippet dayPlot()}
    <rect x="56" y="552" width="100%" height="4" fill="#707070" />
    <path d="M56 591.500H3000" stroke="#777" stroke-dasharray="6 5" />
    <path d="M94 593H3000" stroke="#b8e6ec" stroke-width="2" stroke-dasharray="2 6" />
    <path d="M162 296H3000" stroke="#b8f0f4" stroke-width="2" stroke-dasharray="2 6" />
    {@render sticks(dayCandles)}
    <path d="M69 584l19-3M69 592h17" stroke="#1192b4" stroke-width="2" fill="none" />
    <path d="M56 224.500H3000M436.500 80V703" stroke="#758696" stroke-dasharray="5 6" />
    <g class="smooth">
        <path d="M89.500 685l8.500-5 8.500 5v14h-17z" fill="#06130f" stroke="#0b8a73" stroke-width="1.500" />
        <text x="98" y="695" class="mark" fill="#0b8a73">E</text>
        <path d="M552 686v-5h17v18h-17v-5" fill="#170018" stroke="#d500f9" stroke-width="1.500" />
        <path d="M549 689q2-2 3 0t3 0M549 692q2-2 3 0t3 0" stroke="#d500f9" fill="none" />
        <text x="561" y="695" class="mark" fill="#d500f9">E</text>
    </g>
    {@render bolt(436, 690)}
{/snippet}

{#snippet secPlot()}
    {@render bars(secVolumes)}
    <polyline points={poly(maSec)} class="ma" />
    {@render sticks(secCandles)}
    {@render ticks(vwapSec)}
    {@render box(40, 972, 225, 6)}
    {@render box(40, 1031, 301, 9)}
    <path d="M56 1013H3000" stroke="#c8862e" stroke-width="2" />
    {#each secXs as x}
        <circle cx={x} cy="1013.500" r="2.500" fill="#b8938c" class="smooth" />
    {/each}
    <path d="M56 970H3000" stroke="#b8f0f4" stroke-width="2" stroke-dasharray="2 6" />
    <path d="M56 975.500H3000" stroke="#ffc43a" stroke-width="3" stroke-dasharray="3 9" />
    <path d="M56 1033H3000" stroke="#d5e8e0" stroke-width="2" stroke-dasharray="2 6" />
    <path d="M56 1077.500H436" stroke="#a98d3a" stroke-dasharray="6 5" />
    {@render zone(56, 808, '100%', 428, 0.045)}
    {@render zone(56, 1014, '100%', 181, 0.1)}
    <path d="M56 886.500H3000" stroke="#758696" stroke-dasharray="5 6" />
    <path d="M120 1141.500H3000" stroke="#f23645" />
    <g class="smooth" fill="#e6e6e6">
        <path d="M81 1316h-7v-10h-6v-7h13zM90 1316h-7l7-17h8z" />
        <circle cx="85.500" cy="1302.500" r="3.500" />
    </g>
{/snippet}

{#snippet mainPlot()}
    <text x="787" y="804" class="note" fill="#fff">275 (1.45%), 55</text>
    {@render bars(mainVolumes)}
    <polyline points={poly(maMain)} class="ma" />
    <path d="M767.500 82V1329M1878.500 82V1329" stroke="#221050" stroke-dasharray="1 4" />
    <g fill="rgba(38,166,154,.17)">
        <rect x="913" y="736" width="26" height="84" /><rect x="938" y="904" width="15" height="158" />
        <rect x="1911" y="693" width="15" height="78" /><rect x="2085" y="883" width="21" height="92" />
    </g>
    <g fill="rgba(220,50,50,.22)">
        <rect x="913" y="820" width="26" height="47" /><rect x="938" y="1062" width="15" height="63" />
        <rect x="1911" y="771" width="15" height="123" /><rect x="2085" y="976" width="21" height="36" />
    </g>
    <path d="M912 820.500h27M938 1062.500h15M1911 771.500h15M2085 975.500h21" stroke="#8a8a8a" />
    {@render ticks(vwapMain)}
    <path d="M683 852H3000" stroke="#d5ece8" stroke-width="2" stroke-dasharray="2 6" />
    {#each mainXs as x}
        {#if x < 1873}
            <circle cx={x} cy="851.500" r="2.500" fill={x < 1242 ? '#0e8294' : '#2ea384'} class="smooth" />
        {/if}
    {/each}
    {@render box(812, 722, 245, 10)}
    {@render box(827, 892, 159, 3)}
    {@render box(896, 951, 52, 5)}
    {@render box(1242, 848, 927, 13)}
    {@render box(1752, 769, 406, 8)}
    {@render box(1887, 667, 105, 3)}
    {@render box(1911, 984, 187, 3)}
    <path d="M842 713.500h133" stroke="#c8862e" />
    <path d="M842 894.500h133" stroke="#c8862e" />
    <path d="M842 1075.500h133M1364 902.500h181" stroke="#b8a52b" />
    <path d="M1377 975.500h342" stroke="#b02c38" />
    <path d="M1916 757h37" stroke="#ff9800" stroke-width="2" />
    <path d="M1886 824H3000" stroke="#d58a30" stroke-width="2" />
    <path d="M752 532h14" stroke="#089981" stroke-width="1" />
    <path d="M758 532H1869M683 95h74" stroke="#12b8d4" stroke-width="2" />
    {@render sticks(mainCandles)}
    <path d="M683 773.500H3000" stroke="#ffc43a" stroke-width="3" stroke-dasharray="3 9" />
    <path d="M683 316h95" stroke="#d58a30" stroke-width="2" />
    {#each mainXs as x}
        {#if x > 1880 && (x < 1910 || x > 1930)}
            <circle cx={x} cy="824.500" r="2.500" fill="#c49c90" class="smooth" />
        {/if}
    {/each}
    <path d="M811 821.500h17M811 943.500h17M820.500 822v121M815 826l5-4 5 4" stroke="#22518f" fill="none" />
    {#each [685, 692, 700, 708, 716, 724, 732, 737] as x, i}
        <path d="M{x - 1} {83.5 + i}h3M{x + 0.5} {82 + i}v3" stroke="#3d5af1" />
    {/each}
    <text x="749" y="93" class="note thin" fill="#1fb0c7">1530</text>
    <text x="1859" y="530" class="note thin" fill="#1fb0c7">1530</text>
    <text x="1710" y="974" class="note thin" fill="#b02c38">1230</text>
    <path d="M767 753.500H1872M1878 912.500H2187" stroke="#b4953c" stroke-dasharray="6 5" />
    <path d="M2042 766H3000" stroke="#b8f0f4" stroke-width="2" stroke-dasharray="2 6" />
    {@render zone(683, 82, 93, 449, 0.045)}
    {@render zone(683, 316, 93, 215, 0.1)}
    {@render zone(776, 230, 1111, 856, 0.045)}
    {@render zone(776, 314, 1111, 459, 0.1)}
    {@render zone(1886, 545, '100%', 583, 0.045)}
    {@render zone(1886, 824, '100%', 249, 0.1)}
    <path d="M683 652.500H3000M2106.500 82V1329" stroke="#758696" stroke-dasharray="6 5" />
    <path d="M745 998H3000" stroke="#e02f3e" />
    <g class="smooth">
        <path d="M1971.500 485h11v10h4.500l-9.500 12-9.500-12h3.500z" fill="#047a8c" />
        <path d="M1907 888l3 3M1914 888l-3 3M2081 1005l3 3M2089 1005l-3 3" stroke="#7a5a5e" />
        <rect x="2002" y="1031" width="21" height="18" fill="#7c5a5e" />
        <path d="M2001.500 1029v21M2023.500 1029v21M2001 1039h23" stroke="#e6cdd0" stroke-width="2" />
    </g>
    {@render bolt(2184, 1316)}
{/snippet}

{#snippet pane(key, plot)}
    {@const p = panes[key]}
    <section class="pane {key}">
        <div class="plot">
            <svg class="canvas" aria-hidden="true">
                <g transform="translate({-p.x} {-p.y})">
                    {#each p.prices as { y }}
                        <rect x={p.x} y={y + 1} width="100%" height="1" fill="#121314" />
                    {/each}
                    {@render plot()}
                </g>
            </svg>
            <header class="legend">
                <span class="logo ty">TY</span>
                <h2>{p.title}</h2>
                <span class="status"></span>
                <span class="volume">出来高<b class={p.tone}>{p.volume} {p.unit}</b></span>
            </header>
            {#if p.trade}
                <div class="trade">
                    <button class="sell"><b>18,630</b>売り</button>
                    <label class="qty">15<input bind:value={quantity} aria-label="数量" /></label>
                    <button class="buy"><b>18,645</b>買い</button>
                </div>
                <div class="extras">
                    <button class="count">{@render icon('chevronBold', 10)}9</button>
                    <button class="cycle" aria-label="更新">{@render icon('cycle', 16)}</button>
                </div>
                <table class="gap">
                    <tbody><tr><th>Daily Gap</th><td>-0.6%</td></tr></tbody>
                </table>
                <div class="order" style:left="{p.order.x - p.x}px" style:top="{p.order.y - p.y}px">
                    <span class="position"><b>−200</b><span class="profit">+206.71 USD</span><button aria-label="決済">{@render icon('close', 14)}</button></span>
                    <span class="brackets"><button class="tp">TP</button><button class="sl">SL</button></span>
                    <button class="reverse" aria-label="反転">{@render icon('swap', 17)}</button>
                </div>
                <span class="hmark" style:top="{(key === 'main' ? 852 : 1033) - p.y}px">H</span>
            {:else}
                <div class="notes"><span>p&ensp;t&ensp;s</span><b>hns</b></div>
            {/if}
            {#if key === 'main'}
                <button class="plus-price" aria-label="アラートを追加">{@render icon('plusCircle', 22)}</button>
                <div class="measure">2 バー, 4分<br />出来高 760.8 K</div>
            {/if}
            {#each p.names as n}
                <span class="name" style:top="{n.y - p.y}px" style:background={n.bg} style:color={n.fg}>{n.text}</span>
            {/each}
        </div>
        <div class="prices">
            {#each p.prices as { text, y }}
                {#if !p.covered.includes(text)}
                    <span class="price" style:top="{y - p.y}px">{text}</span>
                {/if}
            {/each}
            {#each p.tags as t}
                <span class="tag" class:bold={t.bold} style:top="{t.y - p.y}px" style:height="{t.h}px" style:width="{t.w}px" style:background={t.bg} style:color={t.fg}>
                    {#each t.text as line, i}<span class:dim={i === 2}>{line}</span>{/each}
                </span>
            {/each}
        </div>
        <div class="times">
            {#each p.times as [text, x]}
                <span class="time" style:left="{x - p.x}px">{text}</span>
            {/each}
            <span class="cursor" style:left="{p.cursor.x - p.x}px" style:width="{p.cursor.w}px">{p.cursor.text}</span>
        </div>
        <div class="corner">{#if key === 'main'}{@render icon('hex', 20)}{/if}</div>
    </section>
{/snippet}

<div class="app">
    <nav class="tabs">
        {#each tabs as tab}
            <button class="tab" class:active={tab.active}>
                <span class="logo" class:slant={tab.slant} class:ring={tab.ring} class:small={tab.mark?.length > 1} style:background={tab.bg} style:color={tab.fg}>
                    {#if tab.logo}<svg viewBox="0 0 18 18" width="18" height="18" aria-hidden="true">{@html logos[tab.logo]}</svg>{:else}{tab.mark}{/if}
                </span>
                <span class="tab-name" class:fade={!tab.dir}>{tab.name}</span>
                {#if tab.dir}<i class={tab.dir}></i><span class="sign {tab.dir}-sign">{tab.dir === 'up' ? '+' : '−'}</span>{/if}
            </button>
        {/each}
        <button class="win new dim-icon" aria-label="新しいタブ">{@render icon('add', 28)}</button>
        <span class="grow"></span>
        <button class="win wide dim-icon" aria-label="モニター">{@render icon('monitor', 32)}</button>
        <button class="win lined dim-icon" aria-label="メニュー">{@render icon('dots3', 24)}</button>
        <button class="win" aria-label="最小化">{@render icon('minimize', 28)}</button>
        <button class="win" aria-label="元に戻す">{@render icon('restore', 28)}</button>
        <button class="win" aria-label="終了">{@render icon('exit', 26)}</button>
    </nav>

    <header class="toolbar">
        <button class="avatar" aria-label="メニュー">
            <svg viewBox="0 0 28 28" width="28" height="28" aria-hidden="true"><circle cx="14" cy="14" r="14" fill="#050508" /><path d="M12 27l2-12 2-5 2-7" fill="none" stroke="#8a4a24" /><path d="M3 12h22M2 17h24M5 22h18" stroke="#2a2a44" stroke-dasharray="1 2" /></svg>
            <span class="badge">10</span>
        </button>
        <label class="search"><input bind:value={symbol} aria-label="シンボル" /><span class="gem">{@render icon('gem', 24)}</span></label>
        <button class="tool add-symbol" aria-label="追加">{@render icon('plusCircle')}</button>
        <span class="sep"></span>
        <div class="intervals">
            {#each intervals as [label, w]}
                <button class:on={label === '2分'} style:width="{w}px">{label}</button>
            {/each}
        </div>
        <button class="chev" aria-label="時間足">{@render icon('chevron', 26)}</button>
        <span class="sep"></span>
        <button class="tool candle" aria-label="ローソク足">{@render icon('candles')}</button>
        <button class="tool on" aria-label="中空ローソク足">{@render icon('hollow')}</button>
        <button class="chev wide" aria-label="チャートタイプ">{@render icon('chevron', 26)}</button>
        <span class="sep"></span>
        <button class="labelled indicator">{@render icon('indicators')}インジケーター</button>
        <button class="chev far" aria-label="お気に入り">{@render icon('chevron', 26)}</button>
        <button class="tool template" aria-label="テンプレート">{@render icon('grid4')}</button>
        <div class="keys">{#each layoutKeys as k}<button>{k}</button>{/each}</div>
        <span class="sep"></span>
        <button class="labelled alert">{@render icon('alarm')}アラート</button>
        <button class="labelled replay">{@render icon('replay')}リプレイ</button>
        <button class="chev far" aria-label="リプレイ設定">{@render icon('chevron', 26)}</button>
        <span class="sep after"></span>
        <button class="tool history" aria-label="元に戻す">{@render icon('undo')}</button>
        <button class="tool history off" aria-label="やり直す">{@render icon('redo')}</button>
        <span class="grow"></span>
        <button class="tool" aria-label="レイアウト">{@render icon('layout')}</button>
        <button class="layout-name">JP stocks<small>保存</small></button>
        <button class="chev layout-chev" aria-label="レイアウト一覧">{@render icon('chevron', 26)}</button>
        <button class="user">J</button>
        <span class="sep"></span>
        <button class="tool quick" aria-label="クイックサーチ">{@render icon('flash')}</button>
        <button class="tool quick" aria-label="設定">{@render icon('hex')}</button>
        <button class="tool quick" aria-label="全画面">{@render icon('full')}</button>
        <button class="tool quick" aria-label="スナップショット">{@render icon('camera')}</button>
        <div class="broker"><button><span class="logo">{@render icon('tv', 14)}</span>トレード</button><button aria-label="ブローカー">{@render icon('chevron', 26)}</button></div>
        <button class="publish">投稿</button>
    </header>

    <div class="body">
        <aside class="tools">
            {#each drawTools as t}
                {#if t === '-'}<hr />{:else}<button class:on={t === 'cross'} class:lit={t === 'link'} aria-label={t}>{@render icon(t)}</button>{/if}
            {/each}
            <span class="grow"></span>
            <button class="lit fav" aria-label="お気に入り">{@render icon('star')}</button>
        </aside>

        <main>
            <div class="charts">
                <div class="left">
                    {@render pane('day', dayPlot)}
                    {@render pane('sec', secPlot)}
                </div>
                {@render pane('main', mainPlot)}
            </div>
            <footer class="ranges">
                {#each ranges as r}<button>{r}</button>{/each}
                <span class="sep"></span>
                <button class="goto" aria-label="日付へ移動">{@render icon('goto')}</button>
                <span class="grow"></span>
                <button class="clock">10:14:16 UTC+9</button>
                <span class="sep"></span>
                <button class="adjust">配当調整</button>
                <button class="corner-btn" aria-label="拡大">{@render icon('expand', 24)}</button>
            </footer>
            <footer class="broker-bar">
                <button class="paper"><span class="tv">{@render icon('tv', 18)}</span>ペーパートレード</button>
                <div class="favorites">
                    <span class="grip"></span>
                    {#each favorites as f}<button aria-label={f}>{@render icon(f)}</button>{/each}
                </div>
                <span class="grow"></span>
                <button class="open" aria-label="開く">{@render icon('chevronUp', 24)}</button>
                <button class="open" aria-label="最大化">{@render icon('expand', 28)}</button>
            </footer>
        </main>

        <aside class="side">
            {#each sideTop as s}
                <button aria-label={s}>{@render icon(s)}{#if s === 'clock'}<span class="badge">65</span>{/if}</button>
            {/each}
            <span class="grow"></span>
            {#each sideBottom as s}<button class="low" aria-label={s}>{@render icon(s)}</button>{/each}
            <button class="low apps" aria-label="アプリ"><span></span></button>
            <hr />
            <button class="low" aria-label="ヘルプ">{@render icon('help')}</button>
        </aside>
    </div>
</div>

<style>
    :global(body) {
        background: #2e2e2e;
        color: #dbdbdb;
        font-family: Roboto, "Noto Sans CJK JP", sans-serif;
        font-size: 14px;
    }

    :global(*) {
        box-sizing: border-box;
    }

    button, input {
        margin: 0;
        padding: 0;
        border: 0;
        background: none;
        color: inherit;
        font: inherit;
    }

    button {
        display: flex;
        align-items: center;
        justify-content: center;
        flex: none;
        white-space: nowrap;
    }

    .icon {
        flex: none;
        fill: none;
        stroke: currentColor;
        stroke-width: 1.2;
    }

    .grow {
        flex: 1;
    }

    .app {
        display: flex;
        flex-direction: column;
        min-height: 100vh;
    }

    /* tabs */
    .tabs {
        display: flex;
        height: 35px;
        background: #3d3d3d;
        overflow: hidden;
    }

    .tab {
        width: 101px;
        justify-content: flex-start;
        gap: 5px;
        padding-left: 12px;
        font-weight: 500;
        font-size: 13px;
        background: linear-gradient(#5a5a5a, #5a5a5a) right center / 1px 22px no-repeat;
    }

    .tab.active {
        background: #0f0f0f;
        border-radius: 6px 6px 0 0;
    }

    .tab-name.fade {
        width: 58px;
        overflow: hidden;
        text-align: left;
        mask-image: linear-gradient(90deg, #000 60%, transparent);
    }

    .tab i {
        border: 5px solid transparent;
        border-top: 0;
        border-bottom: 9px solid #12917c;
    }

    .tab i.down {
        border-top: 10px solid #c9303d;
        border-bottom: 0;
    }

    .sign {
        font-size: 10px;
        color: #2c5a51;
    }

    .down-sign {
        color: #6b3439;
    }

    .logo {
        display: flex;
        align-items: center;
        justify-content: center;
        flex: none;
        width: 18px;
        height: 18px;
        border-radius: 50%;
        font-size: 13px;
        font-weight: 700;
        overflow: hidden;
    }

    .logo.slant {
        font-style: italic;
    }

    .logo.small {
        font-size: 10px;
        font-weight: 500;
    }

    .logo.ring {
        font-size: 10px;
        box-shadow: inset 0 0 0 3px #e60012, inset 0 0 0 4px #fff;
    }

    .win {
        width: 50px;
    }

    .win.new {
        width: 38px;
    }

    .win.wide {
        width: 48px;
    }

    .win.lined {
        border-left: 1px solid #555;
    }

    .dim-icon {
        color: #8c8c8c;
    }

    /* top toolbar */
    .toolbar {
        display: flex;
        align-items: center;
        height: 41px;
        padding: 2px 5px 0 12px;
        margin-bottom: 4px;
        background: #0f0f0f;
    }

    .sep {
        flex: none;
        width: 1px;
        height: 22px;
        background: #3d3d3d;
    }

    .avatar {
        position: relative;
        width: 44px;
        justify-content: flex-start;
    }

    .badge {
        position: absolute;
        top: -3px;
        left: 20px;
        min-width: 18px;
        height: 16px;
        border-radius: 8px;
        background: #f23645;
        color: #fff;
        font-size: 11px;
        line-height: 16px;
        text-align: center;
    }

    .search {
        display: flex;
        align-items: center;
        width: 127px;
        height: 28px;
        padding: 0 1px 0 12px;
        border-radius: 14px;
        background: #3d3d3d;
    }

    .search input {
        flex: 1;
        min-width: 0;
        font-weight: 700;
    }

    .gem {
        display: flex;
        border-radius: 50%;
        background: #0f0f0f;
    }

    .tool {
        width: 34px;
        height: 31px;
        border-radius: 6px;
    }

    .tool.on, .intervals .on {
        background: #3d3d3d;
    }

    .add-symbol {
        width: 47px;
    }

    .candle {
        width: 44px;
    }

    .intervals {
        display: flex;
        gap: 4px;
        padding-left: 7px;
    }

    .intervals button {
        height: 31px;
        border-radius: 5px;
    }

    .chev {
        width: 29px;
    }

    .chev.wide {
        width: 30px;
    }

    .chev.far {
        width: 34px;
    }

    .labelled {
        gap: 4px;
    }

    .indicator {
        width: 143px;
        padding-left: 8px;
    }

    .template {
        margin-right: 4px;
    }

    .keys {
        display: flex;
        gap: 6px;
        margin-right: 14px;
    }

    .keys button {
        width: 22px;
        height: 22px;
        border: 1px solid #4a4a4a;
        border-radius: 50%;
        font-size: 11px;
        font-weight: 500;
    }

    .alert {
        width: 101px;
    }

    .replay {
        width: 102px;
    }

    .history {
        width: 38px;
    }

    .after {
        margin-right: 2px;
    }

    .off {
        color: #7a7a7a;
    }

    .layout-name {
        flex-direction: column;
        width: 68px;
        padding-top: 2px;
        line-height: 14px;
        margin-left: 1px;
    }

    .layout-name small {
        font-size: 10px;
        font-weight: 700;
        line-height: 11px;
        color: #2962ff;
    }

    .layout-chev {
        width: 25px;
    }

    .user {
        width: 22px;
        height: 22px;
        margin: 0 14px 0 2px;
        border-radius: 50%;
        background: #f0f0f0;
        color: #222;
        font-size: 11px;
    }

    .quick {
        width: 38px;
    }

    .broker {
        display: flex;
        width: 119px;
        height: 28px;
        margin: 0 9px 0 6px;
        border: 1px solid #4a4a4a;
        border-radius: 14px;
    }

    .broker button:first-child {
        width: 91px;
        gap: 5px;
        border-right: 1px solid #4a4a4a;
    }

    .broker .logo {
        background: #fff;
        color: #000;
    }

    .publish {
        width: 52px;
        height: 28px;
        border-radius: 14px;
        background: #f2f2f2;
        color: #0f0f0f;
    }

    /* body */
    .body {
        display: grid;
        grid-template-columns: 52px minmax(0, 1fr) 45px;
        gap: 4px;
        flex: 1;
    }

    .tools, .side {
        display: flex;
        flex-direction: column;
        align-items: center;
        background: #0f0f0f;
        border-radius: 0 6px 0 0;
        padding-top: 8px;
    }

    .side {
        border-radius: 6px 0 0;
        padding-top: 1px;
        padding-bottom: 4px;
    }

    .tools button {
        width: 34px;
        height: 34px;
        margin-bottom: 4px;
        border-radius: 6px;
    }

    .tools .on {
        background: #3d3d3d;
    }

    .tools .lit {
        background: #f2f2f2;
        color: #0f0f0f;
    }

    .tools .fav {
        margin-bottom: 24px;
    }

    hr {
        width: 36px;
        height: 1px;
        margin: 4px 0 8px;
        border: 0;
        background: #4a4a4a;
    }

    .side button {
        position: relative;
        width: 45px;
        height: 46px;
    }

    .side .low {
        height: 45px;
    }

    .side hr {
        margin: 6px 0 6px;
    }

    .side .badge {
        top: 4px;
        left: 22px;
    }

    .apps span {
        width: 34px;
        height: 34px;
        border-radius: 50%;
        background: radial-gradient(circle, #111 2px, transparent 3px) 5px 5px / 8px 8px #f2f2f2;
        box-shadow: inset 0 0 0 5px #f2f2f2;
    }

    main {
        display: flex;
        flex-direction: column;
        min-width: 0;
        padding-bottom: 2px;
    }

    .charts {
        display: grid;
        grid-template-columns: 623fr 1830fr;
        gap: 2px;
        flex: 1;
        margin-bottom: 1px;
    }

    .left {
        display: grid;
        grid-template-rows: 652fr 623fr;
        gap: 2px;
    }

    .pane {
        display: grid;
        grid-template-columns: minmax(0, 1fr) 56px;
        grid-template-rows: minmax(0, 1fr) 28px;
        background: #000;
        border-radius: 5px;
        overflow: hidden;
    }

    .pane.day {
        grid-template-columns: minmax(0, 1fr) 68px;
        grid-template-rows: minmax(0, 1fr) 29px;
    }

    .pane.main {
        border: 2px solid #8c8c8c;
        grid-template-rows: minmax(0, 1fr) 26px;
    }

    .plot, .prices, .times {
        position: relative;
        overflow: hidden;
    }

    .prices, .corner {
        border-left: 1px solid #787878;
    }

    .times, .corner {
        border-top: 1px solid #787878;
    }

    .corner {
        display: flex;
        align-items: center;
        justify-content: center;
    }

    .canvas {
        position: absolute;
        inset: 0;
        width: 100%;
        height: 100%;
        shape-rendering: crispEdges;
    }

    .smooth {
        shape-rendering: auto;
    }

    .ma {
        fill: none;
        stroke: #6a6a20;
        stroke-dasharray: 1 3;
    }

    .mark {
        font-size: 11px;
        font-weight: 700;
        text-anchor: middle;
    }

    .note {
        font-size: 9px;
        font-weight: 700;
    }

    .note.thin {
        font-weight: 400;
    }

    .legend {
        position: relative;
        display: flex;
        align-items: center;
        height: 33px;
        padding-left: 9px;
    }

    .main .legend {
        padding-left: 7px;
        height: 29px;
    }

    .sec .legend {
        height: 31px;
    }

    .logo.ty {
        background: #f0f3fa;
        color: #d8222f;
        font-size: 10px;
        font-weight: 500;
    }

    h2 {
        margin: 0 8px 0 4px;
        font-size: 16px;
        line-height: 22px;
        font-weight: 400;
    }

    .status {
        width: 14px;
        height: 14px;
        margin-right: 10px;
        border: 3px solid #06231e;
        border-radius: 50%;
        background: #42bda8;
    }

    .volume {
        font-size: 13px;
    }

    .volume b {
        font-weight: 400;
        color: #f23645;
    }

    .volume .up {
        color: #089981;
    }

    .trade {
        position: relative;
        display: flex;
        gap: 8px;
        margin: 3px 0 0 9px;
    }

    .main .trade, .main .extras {
        margin-left: 7px;
    }

    .sec .trade {
        margin-top: 2px;
    }

    .trade button {
        flex-direction: column;
        width: 62px;
        height: 34px;
        border-radius: 5px;
        font-size: 12px;
        line-height: 14px;
        color: #fff;
    }

    .trade button b {
        font-weight: 500;
    }

    .sell {
        background: #f23645;
    }

    .buy {
        background: #2962ff;
    }

    .qty {
        display: flex;
        flex-direction: column;
        width: 38px;
        font-size: 10px;
        line-height: 12px;
        text-align: center;
    }

    .qty input {
        width: 38px;
        height: 22px;
        border: 1px solid #3d3d3d;
        border-radius: 5px;
        font-size: 13px;
        text-align: center;
        color: #fff;
    }

    .extras {
        position: relative;
        display: flex;
        align-items: center;
        gap: 16px;
        margin: 7px 0 0 9px;
    }

    .count {
        width: 32px;
        height: 21px;
        gap: 4px;
        border: 1px solid #3d3d3d;
        border-radius: 3px;
        font-size: 13px;
    }

    .cycle {
        width: 18px;
        height: 18px;
        border-radius: 50%;
        background: #33235a;
        color: #a78bfa;
    }

    .gap {
        position: absolute;
        top: 8px;
        right: 9px;
        border-spacing: 1px 0;
        font-size: 11px;
        font-weight: 500;
    }

    .gap th, .gap td {
        height: 19px;
        padding: 0 3px;
        background: #1c1d20;
        font-weight: 500;
        color: #eee;
    }

    .gap td {
        background: #963033;
    }

    .order {
        position: absolute;
        display: flex;
        gap: 10px;
        height: 19px;
        font-size: 12px;
    }

    .position, .brackets {
        display: flex;
        border-radius: 3px;
        background: #0f0f0f;
    }

    .position {
        border: 1px solid #f23645;
    }

    .position b {
        width: 43px;
        background: #f23645;
        color: #fff;
        font-weight: 500;
        line-height: 17px;
        text-align: center;
    }

    .profit {
        width: 89px;
        color: #14907a;
        line-height: 17px;
        text-align: center;
        font-size: 13px;
    }

    .position button {
        width: 24px;
        border-left: 1px solid #6b2029;
        color: #f23645;
    }

    .brackets button {
        width: 30px;
        border: 1px dotted #0b7d6a;
        color: #0b7d6a;
    }

    .brackets .sl {
        width: 29px;
        border-color: #c77a08;
        color: #ff9800;
    }

    .reverse {
        width: 29px;
        border: 1px solid #f23645;
        border-radius: 3px;
        background: #0f0f0f;
        color: #f23645;
    }

    .hmark {
        position: absolute;
        right: 6px;
        color: #e0b93a;
        font-size: 12px;
        font-weight: 700;
        line-height: 17px;
    }

    .notes {
        position: absolute;
        top: 496px;
        right: 8px;
        text-align: right;
        font-size: 12px;
        line-height: 17px;
    }

    .notes span, .notes b {
        display: block;
        color: #f5e532;
    }

    .notes b {
        color: #fff;
        font-weight: 500;
    }

    .plus-price {
        position: absolute;
        top: 560px;
        right: 0;
        width: 21px;
        height: 20px;
        border-radius: 2px 0 0 2px;
        background: #363a45;
        color: #fff;
    }

    .measure {
        position: absolute;
        left: 1281px;
        top: 976px;
        width: 96px;
        padding: 2px 0 3px;
        border-radius: 4px;
        background: #2c171c;
        color: #d8c8d4;
        font-size: 12px;
        line-height: 20px;
        text-align: center;
    }

    .name {
        position: absolute;
        right: 0;
        height: 17px;
        padding: 0 4px;
        border-radius: 2px 0 0 2px;
        font-size: 12px;
        line-height: 17px;
    }

    .price {
        position: absolute;
        left: 8px;
        margin-top: -8px;
        font-size: 12px;
        line-height: 16px;
    }

    .tag {
        position: absolute;
        left: 0;
        display: flex;
        flex-direction: column;
        justify-content: center;
        padding-left: 8px;
        border-radius: 0 2px 2px 0;
        font-size: 12px;
        line-height: 15px;
        white-space: nowrap;
    }

    .bold {
        font-weight: 500;
    }

    .dim {
        opacity: .75;
    }

    .time {
        position: absolute;
        top: 5px;
        transform: translateX(-50%);
        font-size: 12px;
        line-height: 16px;
    }

    .cursor {
        position: absolute;
        top: 0;
        height: 23px;
        background: #363a45;
        border-radius: 0 0 2px 2px;
        color: #fff;
        font-size: 12px;
        font-weight: 500;
        line-height: 25px;
        text-align: center;
        white-space: pre;
    }

    /* bottom bars */
    .ranges, .broker-bar {
        display: flex;
        align-items: center;
        height: 38px;
        background: #0f0f0f;
        border-radius: 5px;
    }

    .ranges {
        gap: 12px;
        padding: 0 11px 2px 14px;
        margin-bottom: 4px;
    }

    .ranges .sep {
        margin: 0 -2px;
    }

    .goto {
        margin-left: -3px;
    }

    .corner-btn {
        width: 24px;
    }

    .paper {
        width: 452px;
        justify-content: flex-start;
        gap: 8px;
        padding-left: 8px;
    }

    .tv {
        position: relative;
        display: flex;
        align-items: center;
        justify-content: center;
        width: 24px;
        height: 24px;
        border-radius: 5px;
        background: #2e2e2e;
        color: #fff;
    }

    .tv::after {
        content: '';
        position: absolute;
        top: -1px;
        right: -1px;
        width: 6px;
        height: 6px;
        border-radius: 50%;
        background: #089981;
    }

    .favorites {
        display: flex;
        align-items: center;
        height: 38px;
        border-radius: 6px;
        background: #1f1f1f;
    }

    .favorites button {
        width: 38px;
        height: 38px;
    }

    .grip {
        width: 24px;
        height: 16px;
        background: radial-gradient(circle, #555 1px, transparent 2px) 7px 0 / 5px 5px;
        border-right: 9px solid #1f1f1f;
        border-left: 7px solid #1f1f1f;
    }

    .open {
        width: 37px;
    }
</style>
